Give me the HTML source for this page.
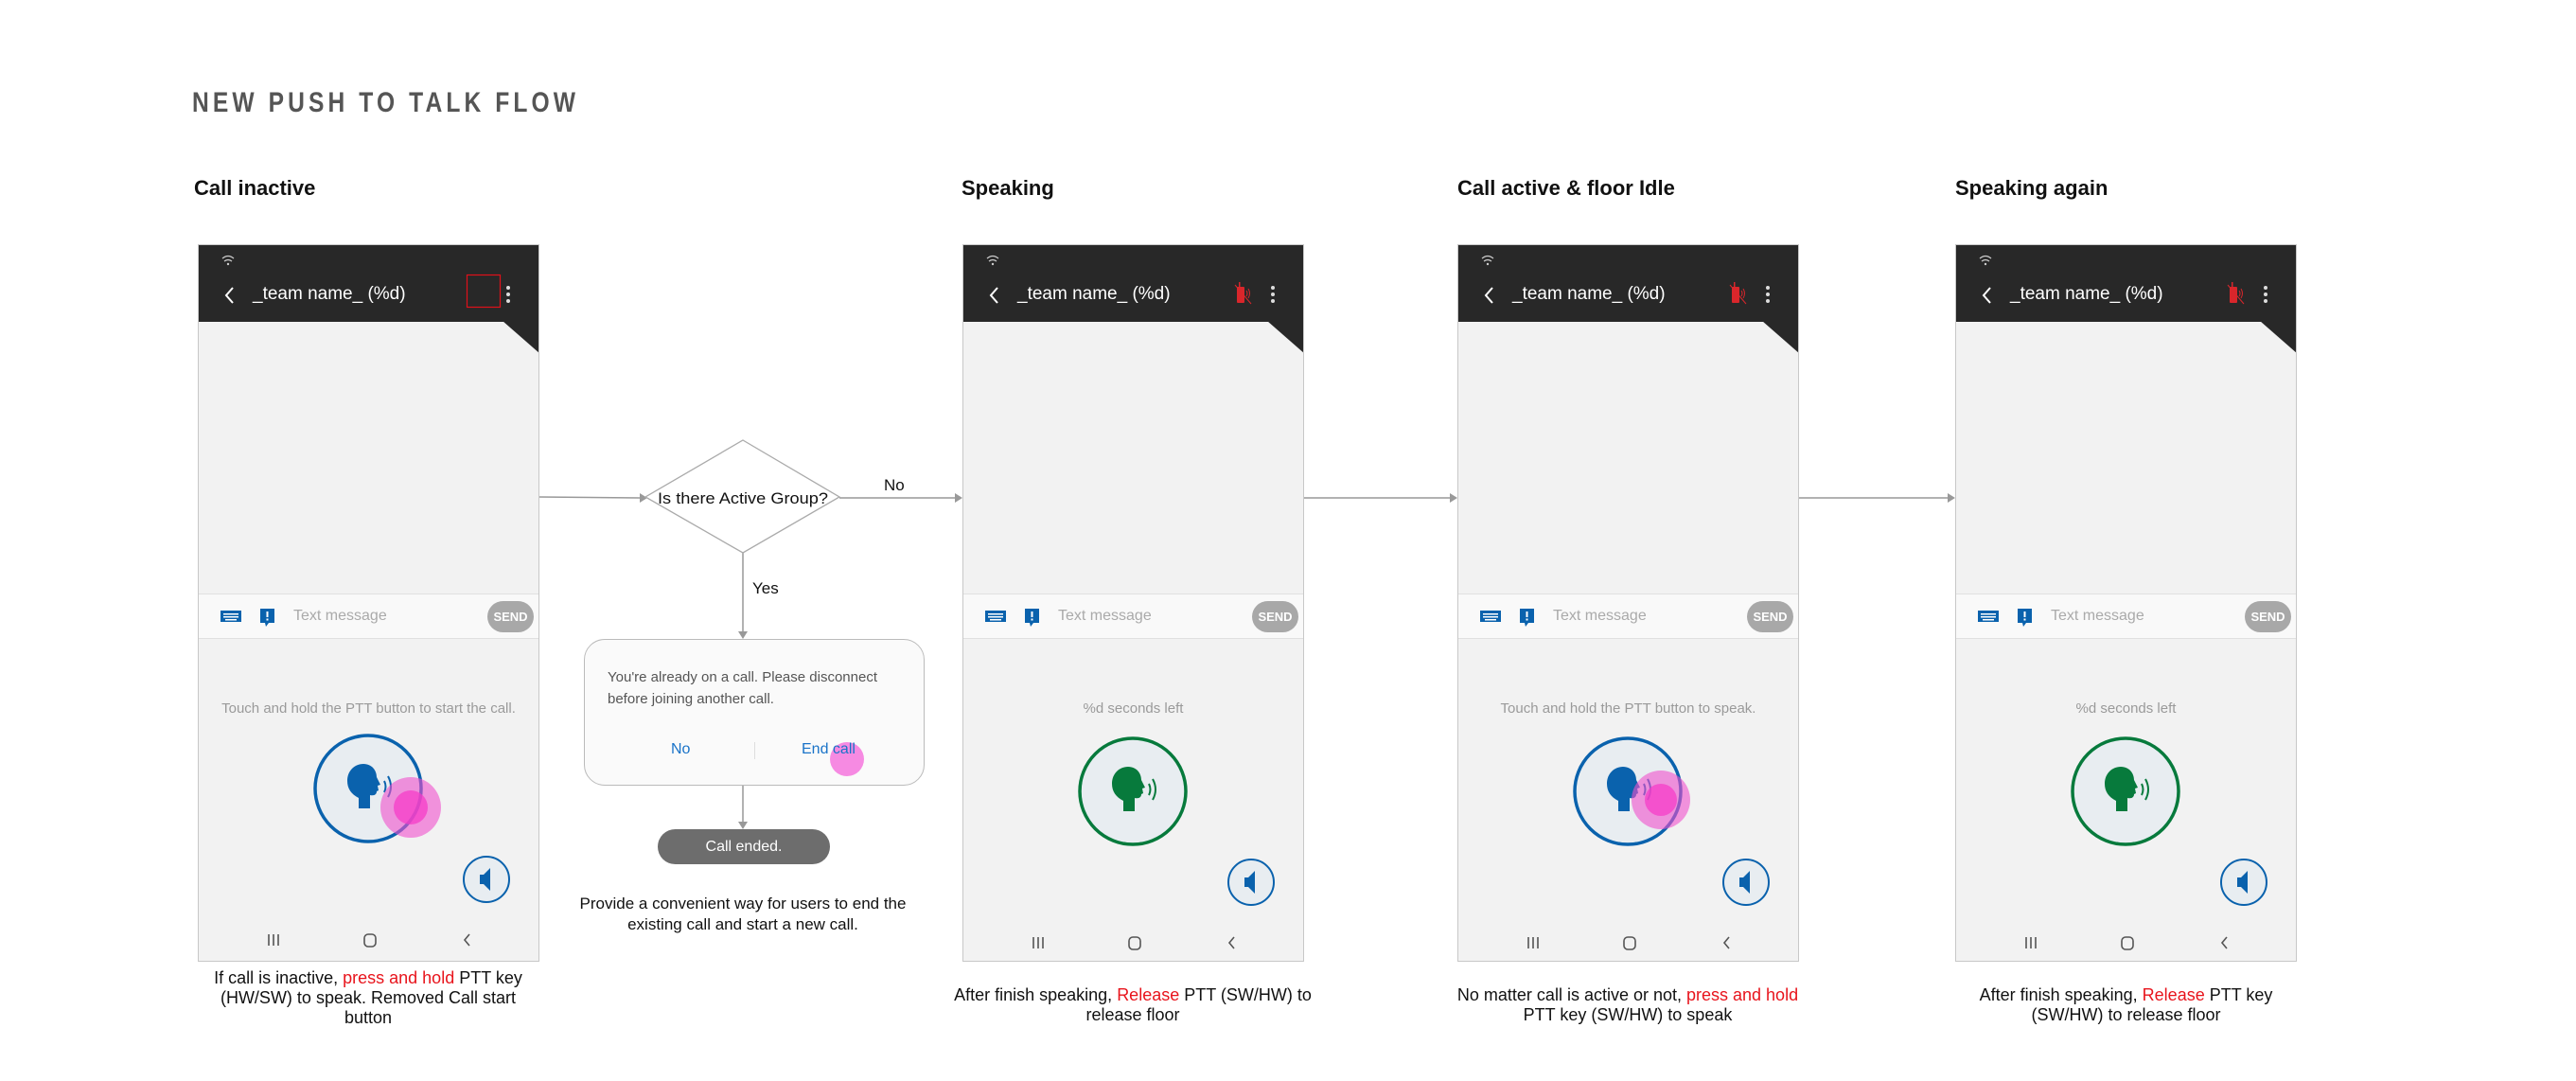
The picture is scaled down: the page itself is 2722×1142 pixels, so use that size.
<!DOCTYPE html>
<html><head><meta charset="utf-8"><style>
*{margin:0;padding:0;box-sizing:border-box}
body{width:2722px;height:1142px;background:#fff;position:relative;overflow:hidden;font-family:"Liberation Sans",sans-serif;color:#111}
.a{position:absolute}
.title{left:203px;top:92px;font-weight:bold;font-size:30px;letter-spacing:5px;color:#555;transform:scaleX(0.82);transform-origin:left top;white-space:nowrap}
.h{font-weight:bold;font-size:22px;top:186px;color:#111}
.ph{position:absolute;top:258px;width:361px;height:758px;border:1px solid #c8c8c8;background:#f2f2f2;overflow:hidden}
.hd{position:absolute;left:0;top:0;width:100%;height:81px;background:#282828}
.tn{position:absolute;left:57px;top:41px;font-size:19px;color:#fff}
.in{position:absolute;left:0;top:368px;width:100%;height:48px;background:#f9f9f9;border-top:1px solid #e0e0e0;border-bottom:1px solid #e0e0e0}
.tm{position:absolute;left:100px;top:14px;font-size:16px;color:#aaa}
.send{position:absolute;left:305px;top:7px;width:49px;height:33px;border-radius:17px;background:#a8a8a8;color:#fff;font-weight:bold;font-size:13px;text-align:center;line-height:33px}
.hint{position:absolute;left:0;width:100%;top:481px;text-align:center;font-size:15px;color:#9a9a9a}
.cap{position:absolute;width:420px;text-align:center;font-size:18px;line-height:21px;color:#111}
.r{color:#e8141c}
</style></head><body>
<div class="a title">NEW PUSH TO TALK FLOW</div>
<div class="a h" style="left:205px">Call inactive</div>
<div class="a h" style="left:1016px">Speaking</div>
<div class="a h" style="left:1540px">Call active &amp; floor Idle</div>
<div class="a h" style="left:2066px">Speaking again</div>

<svg class="a" style="left:0;top:0" width="2722" height="1142">
<g stroke="#999" stroke-width="1.5" fill="#999">
<line x1="570" y1="525" x2="676" y2="526"/><polygon points="676,521 684,526 676,531" stroke="none"/>
<line x1="887" y1="526" x2="1010" y2="526"/><polygon points="1009,521 1017,526 1009,531" stroke="none"/>
<line x1="1378" y1="526" x2="1533" y2="526"/><polygon points="1532,521 1540,526 1532,531" stroke="none"/>
<line x1="1900" y1="526" x2="2059" y2="526"/><polygon points="2058,521 2066,526 2058,531" stroke="none"/>
<line x1="785" y1="584" x2="785" y2="667"/><polygon points="780,667 785,675 790,667" stroke="none"/>
<line x1="785" y1="830" x2="785" y2="869"/><polygon points="780,868 785,876 790,868" stroke="none"/>
</g>
<polygon points="785,465 887,525 785,584 682,525" fill="#fff" stroke="#aaa" stroke-width="1.3"/>
<text x="785" y="532" text-anchor="middle" font-family="Liberation Sans" font-size="17" fill="#111" textLength="180" lengthAdjust="spacingAndGlyphs">Is there Active Group?</text>
<text x="934" y="518" font-family="Liberation Sans" font-size="17" fill="#111">No</text>
<text x="795" y="627" font-family="Liberation Sans" font-size="17" fill="#111">Yes</text>
</svg>

<div class="a" style="left:617px;top:675px;width:360px;height:155px;border:1.5px solid #bbb;border-radius:22px;background:#fafafa"></div>
<div class="a" style="left:642px;top:704px;font-size:15px;line-height:23px;color:#555;width:330px">You're already on a call. Please disconnect before joining another call.</div>
<div class="a" style="left:709px;top:783px;font-size:16px;color:#1a73c8">No</div>
<div class="a" style="left:797px;top:784px;width:1px;height:18px;background:#ddd"></div>
<div class="a" style="left:877px;top:784px;width:36px;height:36px;border-radius:50%;background:rgba(245,110,220,.8)"></div>
<div class="a" style="left:847px;top:783px;font-size:16px;color:#1a73c8">End call</div>
<div class="a" style="left:695px;top:876px;width:182px;height:37px;border-radius:19px;background:#6d6d6d;color:#fff;font-size:16px;text-align:center;line-height:37px">Call ended.</div>
<div class="a" style="left:600px;top:944px;width:370px;text-align:center;font-size:17px;line-height:22px">Provide a convenient way for users to end the existing call and start a new call.</div>

<!-- PHONE 1 -->
<div class="ph" style="left:209px">
 <div class="hd"></div>
 <svg class="a" style="left:0;top:0" width="361" height="130">
  <polygon points="321,80 361,80 361,115" fill="#282828"/>
  <g fill="none" stroke="#ccc" stroke-width="1.2"><path d="M25,14 q6,-5 12,0"/><path d="M27,17 q4,-3 8,0"/></g><circle cx="31" cy="20" r="1.2" fill="#ccc"/>
  <path d="M36,45 l-7,8 l7,8" fill="none" stroke="#fff" stroke-width="2"/>
  <rect x="283.5" y="31.5" width="35" height="34" fill="none" stroke="#e0101a" stroke-width="1.2"/>
  <g fill="#ddd"><circle cx="327" cy="45" r="2"/><circle cx="327" cy="52" r="2"/><circle cx="327" cy="59" r="2"/></g>
 </svg>
 <div class="tn">_team name_ (%d)</div>
 <div class="in">
  <svg class="a" style="left:22px;top:15px" width="64" height="20"><rect x="1" y="2" width="22" height="12" fill="#0a62ad"/><g fill="#fff"><rect x="4" y="5" width="16" height="1.5"/><rect x="4" y="8" width="16" height="1.5"/><rect x="6" y="11" width="12" height="1.5"/></g><rect x="43" y="0" width="15" height="15" fill="#0a62ad"/><polygon points="48,15 52,15 49,19" fill="#0a62ad"/><rect x="49.5" y="3" width="2" height="6" fill="#fff"/><rect x="49.5" y="10.5" width="2" height="2" fill="#fff"/></svg>
  <div class="tm">Text message</div><div class="send">SEND</div>
 </div>
 <div class="hint">Touch and hold the PTT button to start the call.</div>
 <svg class="a" style="left:0;top:500px" width="361" height="258">
  <circle cx="179" cy="74" r="56" fill="#e8edf1" stroke="#0a62ad" stroke-width="3.5"/>
  <path d="M169,95 v-11 c-8,-4 -12,-10 -12,-18 c0,-11 8,-18 17,-18 c9,0 14,7 14,14 l4,8 l-3,1 l1,5 l-2,1 c0,3 -2,5 -7,4 v14 z" fill="#0a62ad"/>
  <g fill="none" stroke="#0a62ad" stroke-width="2"><path d="M196,66 q3,6 0,12"/><path d="M200,61 q6,11 0,22"/></g>
  <circle cx="224" cy="94" r="32" fill="rgba(240,80,205,.6)"/><circle cx="224" cy="94" r="18" fill="rgba(245,60,200,.75)"/>
  <circle cx="304" cy="170" r="24" fill="#e8edf1" stroke="#0a62ad" stroke-width="2"/>
  <path d="M297,165 h4 l7,-7 v24 l-7,-7 h-4 z" fill="#0a62ad"/>
  <g stroke="#555" stroke-width="1.6" fill="none"><path d="M74,228 v12 M79,228 v12 M84,228 v12"/><rect x="175" y="228" width="12" height="13" rx="4"/><path d="M286,228 l-5,6 l5,6"/></g>
 </svg>
</div>

<div class="ph" style="left:1017px">
 <div class="hd"></div>
 <svg class="a" style="left:0;top:0" width="361" height="130">
  <polygon points="321,80 361,80 361,115" fill="#282828"/>
  <g fill="none" stroke="#ccc" stroke-width="1.2"><path d="M25,14 q6,-5 12,0"/><path d="M27,17 q4,-3 8,0"/></g><circle cx="31" cy="20" r="1.2" fill="#ccc"/>
  <path d="M36,45 l-7,8 l7,8" fill="none" stroke="#fff" stroke-width="2"/>
  <rect x="289" y="44" width="8" height="17" rx="1" fill="#d9262b"/><rect x="291" y="39" width="1.5" height="6" fill="#d9262b"/><path d="M299,48 q2,3 0,6 M301,46 q3,5 0,10" stroke="#d9262b" fill="none" stroke-width="1"/><line x1="287" y1="42" x2="304" y2="62" stroke="#d9262b" stroke-width="1"/>
  <g fill="#ddd"><circle cx="327" cy="45" r="2"/><circle cx="327" cy="52" r="2"/><circle cx="327" cy="59" r="2"/></g>
 </svg>
 <div class="tn">_team name_ (%d)</div>
 <div class="in">
  <svg class="a" style="left:22px;top:15px" width="64" height="20"><rect x="1" y="2" width="22" height="12" fill="#0a62ad"/><g fill="#fff"><rect x="4" y="5" width="16" height="1.5"/><rect x="4" y="8" width="16" height="1.5"/><rect x="6" y="11" width="12" height="1.5"/></g><rect x="43" y="0" width="15" height="15" fill="#0a62ad"/><polygon points="48,15 52,15 49,19" fill="#0a62ad"/><rect x="49.5" y="3" width="2" height="6" fill="#fff"/><rect x="49.5" y="10.5" width="2" height="2" fill="#fff"/></svg>
  <div class="tm">Text message</div><div class="send">SEND</div>
 </div>
 <div class="hint">%d seconds left</div>
 <svg class="a" style="left:0;top:500px" width="361" height="258">
  <circle cx="179" cy="77" r="56" fill="#e8edf1" stroke="#077a3c" stroke-width="3.5"/>
  <path d="M169,98 v-11 c-8,-4 -12,-10 -12,-18 c0,-11 8,-18 17,-18 c9,0 14,7 14,14 l4,8 l-3,1 l1,5 l-2,1 c0,3 -2,5 -7,4 v14 z" fill="#077a3c"/>
  <g fill="none" stroke="#077a3c" stroke-width="2"><path d="M196,69 q3,6 0,12"/><path d="M200,64 q6,11 0,22"/></g>
  <circle cx="304" cy="173" r="24" fill="#e8edf1" stroke="#0a62ad" stroke-width="2"/>
  <path d="M297,168 h4 l7,-7 v24 l-7,-7 h-4 z" fill="#0a62ad"/>
  <g stroke="#555" stroke-width="1.6" fill="none"><path d="M74,231 v12 M79,231 v12 M84,231 v12"/><rect x="175" y="231" width="12" height="13" rx="4"/><path d="M286,231 l-5,6 l5,6"/></g>
 </svg>
</div>

<div class="ph" style="left:1540px">
 <div class="hd"></div>
 <svg class="a" style="left:0;top:0" width="361" height="130">
  <polygon points="321,80 361,80 361,115" fill="#282828"/>
  <g fill="none" stroke="#ccc" stroke-width="1.2"><path d="M25,14 q6,-5 12,0"/><path d="M27,17 q4,-3 8,0"/></g><circle cx="31" cy="20" r="1.2" fill="#ccc"/>
  <path d="M36,45 l-7,8 l7,8" fill="none" stroke="#fff" stroke-width="2"/>
  <rect x="289" y="44" width="8" height="17" rx="1" fill="#d9262b"/><rect x="291" y="39" width="1.5" height="6" fill="#d9262b"/><path d="M299,48 q2,3 0,6 M301,46 q3,5 0,10" stroke="#d9262b" fill="none" stroke-width="1"/><line x1="287" y1="42" x2="304" y2="62" stroke="#d9262b" stroke-width="1"/>
  <g fill="#ddd"><circle cx="327" cy="45" r="2"/><circle cx="327" cy="52" r="2"/><circle cx="327" cy="59" r="2"/></g>
 </svg>
 <div class="tn">_team name_ (%d)</div>
 <div class="in">
  <svg class="a" style="left:22px;top:15px" width="64" height="20"><rect x="1" y="2" width="22" height="12" fill="#0a62ad"/><g fill="#fff"><rect x="4" y="5" width="16" height="1.5"/><rect x="4" y="8" width="16" height="1.5"/><rect x="6" y="11" width="12" height="1.5"/></g><rect x="43" y="0" width="15" height="15" fill="#0a62ad"/><polygon points="48,15 52,15 49,19" fill="#0a62ad"/><rect x="49.5" y="3" width="2" height="6" fill="#fff"/><rect x="49.5" y="10.5" width="2" height="2" fill="#fff"/></svg>
  <div class="tm">Text message</div><div class="send">SEND</div>
 </div>
 <div class="hint">Touch and hold the PTT button to speak.</div>
 <svg class="a" style="left:0;top:500px" width="361" height="258">
  <circle cx="179" cy="77" r="56" fill="#e8edf1" stroke="#0a62ad" stroke-width="3.5"/>
  <path d="M169,98 v-11 c-8,-4 -12,-10 -12,-18 c0,-11 8,-18 17,-18 c9,0 14,7 14,14 l4,8 l-3,1 l1,5 l-2,1 c0,3 -2,5 -7,4 v14 z" fill="#0a62ad"/>
  <g fill="none" stroke="#0a62ad" stroke-width="2"><path d="M196,69 q3,6 0,12"/><path d="M200,64 q6,11 0,22"/></g>
  <circle cx="214" cy="86" r="31" fill="rgba(240,80,205,.6)"/><circle cx="214" cy="86" r="17" fill="rgba(245,60,200,.75)"/>
  <circle cx="304" cy="173" r="24" fill="#e8edf1" stroke="#0a62ad" stroke-width="2"/>
  <path d="M297,168 h4 l7,-7 v24 l-7,-7 h-4 z" fill="#0a62ad"/>
  <g stroke="#555" stroke-width="1.6" fill="none"><path d="M74,231 v12 M79,231 v12 M84,231 v12"/><rect x="175" y="231" width="12" height="13" rx="4"/><path d="M286,231 l-5,6 l5,6"/></g>
 </svg>
</div>

<div class="ph" style="left:2066px">
 <div class="hd"></div>
 <svg class="a" style="left:0;top:0" width="361" height="130">
  <polygon points="321,80 361,80 361,115" fill="#282828"/>
  <g fill="none" stroke="#ccc" stroke-width="1.2"><path d="M25,14 q6,-5 12,0"/><path d="M27,17 q4,-3 8,0"/></g><circle cx="31" cy="20" r="1.2" fill="#ccc"/>
  <path d="M36,45 l-7,8 l7,8" fill="none" stroke="#fff" stroke-width="2"/>
  <rect x="289" y="44" width="8" height="17" rx="1" fill="#d9262b"/><rect x="291" y="39" width="1.5" height="6" fill="#d9262b"/><path d="M299,48 q2,3 0,6 M301,46 q3,5 0,10" stroke="#d9262b" fill="none" stroke-width="1"/><line x1="287" y1="42" x2="304" y2="62" stroke="#d9262b" stroke-width="1"/>
  <g fill="#ddd"><circle cx="327" cy="45" r="2"/><circle cx="327" cy="52" r="2"/><circle cx="327" cy="59" r="2"/></g>
 </svg>
 <div class="tn">_team name_ (%d)</div>
 <div class="in">
  <svg class="a" style="left:22px;top:15px" width="64" height="20"><rect x="1" y="2" width="22" height="12" fill="#0a62ad"/><g fill="#fff"><rect x="4" y="5" width="16" height="1.5"/><rect x="4" y="8" width="16" height="1.5"/><rect x="6" y="11" width="12" height="1.5"/></g><rect x="43" y="0" width="15" height="15" fill="#0a62ad"/><polygon points="48,15 52,15 49,19" fill="#0a62ad"/><rect x="49.5" y="3" width="2" height="6" fill="#fff"/><rect x="49.5" y="10.5" width="2" height="2" fill="#fff"/></svg>
  <div class="tm">Text message</div><div class="send">SEND</div>
 </div>
 <div class="hint">%d seconds left</div>
 <svg class="a" style="left:0;top:500px" width="361" height="258">
  <circle cx="179" cy="77" r="56" fill="#e8edf1" stroke="#077a3c" stroke-width="3.5"/>
  <path d="M169,98 v-11 c-8,-4 -12,-10 -12,-18 c0,-11 8,-18 17,-18 c9,0 14,7 14,14 l4,8 l-3,1 l1,5 l-2,1 c0,3 -2,5 -7,4 v14 z" fill="#077a3c"/>
  <g fill="none" stroke="#077a3c" stroke-width="2"><path d="M196,69 q3,6 0,12"/><path d="M200,64 q6,11 0,22"/></g>
  <circle cx="304" cy="173" r="24" fill="#e8edf1" stroke="#0a62ad" stroke-width="2"/>
  <path d="M297,168 h4 l7,-7 v24 l-7,-7 h-4 z" fill="#0a62ad"/>
  <g stroke="#555" stroke-width="1.6" fill="none"><path d="M74,231 v12 M79,231 v12 M84,231 v12"/><rect x="175" y="231" width="12" height="13" rx="4"/><path d="M286,231 l-5,6 l5,6"/></g>
 </svg>
</div>

<div class="cap" style="left:214px;top:1023px;width:350px">If call is inactive, <span class="r">press and hold</span> PTT key (HW/SW) to speak. Removed Call start button</div>
<div class="cap" style="left:987px;top:1041px">After finish speaking, <span class="r">Release</span> PTT (SW/HW) to release floor</div>
<div class="cap" style="left:1530px;top:1041px;width:380px">No matter call is active or not, <span class="r">press and hold</span> PTT key (SW/HW) to speak</div>
<div class="cap" style="left:2066px;top:1041px;width:361px">After finish speaking, <span class="r">Release</span> PTT key (SW/HW) to release floor</div>
</body></html>
